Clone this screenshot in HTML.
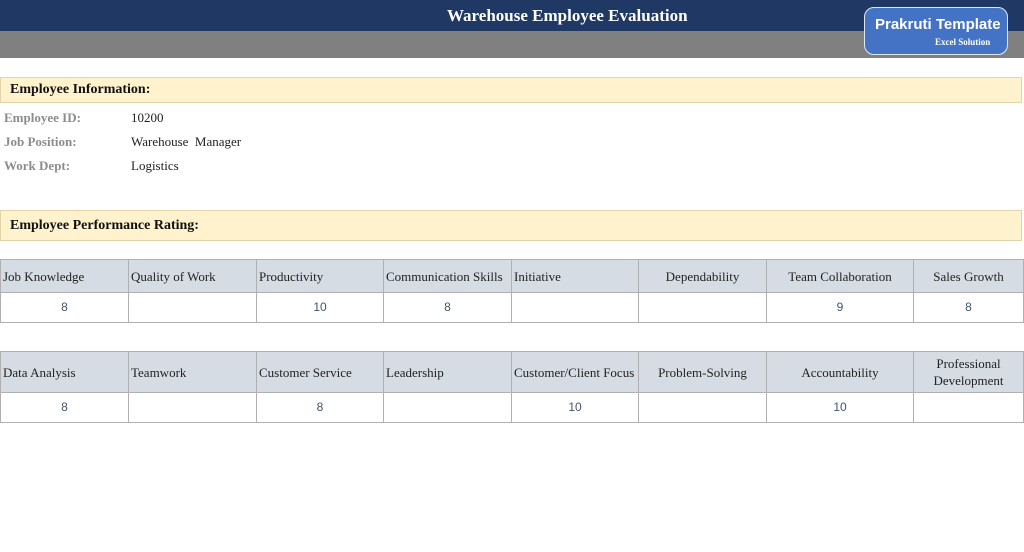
<!DOCTYPE html><html><head><style>
body{margin:0;width:1024px;height:552px;background:#fff;position:relative;overflow:hidden;font-family:"Liberation Serif",serif;}
.a{position:absolute}
.bar{position:absolute;left:0;width:1022px;background:#fff2cc;border:1px solid #e3d3a8;font-weight:bold;font-size:14px;color:#111;box-sizing:border-box;padding-left:9px}
.lbl{position:absolute;left:4px;font-weight:bold;color:#8c8c8c;font-size:13px}
.val{position:absolute;left:131px;color:#222;font-size:13px}
table{position:absolute;left:0;border-collapse:collapse;table-layout:fixed;width:1023px;font-size:13px}
td{border:1px solid #b0b0b0;padding:0 2px;line-height:17px}
tr.h td{background:#d6dce4;color:#222}
tr.d td{text-align:center;color:#44546a;height:29px;font-family:"Liberation Sans",sans-serif;font-size:12px}
.c{text-align:center}
</style></head><body>
<div class="a" style="left:0;top:0;width:1024px;height:31px;background:#1f3864"></div>
<div class="a" style="left:0;top:31px;width:1024px;height:27px;background:#808080"></div>
<div class="a" style="left:447px;top:6px;color:#fff;font-weight:bold;font-size:17px">Warehouse Employee Evaluation</div>
<div class="a" style="left:864px;top:7px;width:142px;height:46px;background:#4472c4;border:1.5px solid #dfe8f7;border-radius:10px"></div>
<div class="a" style="left:875px;top:16px;color:#fff;font-family:'Liberation Sans',sans-serif;font-weight:bold;font-size:15px">Prakruti Template</div>
<div class="a" style="left:935px;top:37px;color:#fff;font-weight:bold;font-size:9px">Excel Solution</div>
<div class="bar" style="top:77px;height:26px;line-height:24px">Employee Information:</div>
<div class="lbl" style="top:110px">Employee ID:</div><div class="val" style="top:110px">10200</div>
<div class="lbl" style="top:134px">Job Position:</div><div class="val" style="top:134px">Warehouse&nbsp; Manager</div>
<div class="lbl" style="top:158px">Work Dept:</div><div class="val" style="top:158px">Logistics</div>
<div class="bar" style="top:210px;height:31px;line-height:30px">Employee Performance Rating:</div>
<table style="top:259px"><colgroup><col style="width:128px"><col style="width:128px"><col style="width:127px"><col style="width:128px"><col style="width:127px"><col style="width:128px"><col style="width:147px"><col style="width:110px"></colgroup>
<tr class="h" style="height:33px"><td>Job Knowledge</td><td>Quality of Work</td><td>Productivity</td><td>Communication Skills</td><td>Initiative</td><td class="c">Dependability</td><td class="c">Team Collaboration</td><td class="c">Sales Growth</td></tr>
<tr class="d"><td>8</td><td></td><td>10</td><td>8</td><td></td><td></td><td>9</td><td>8</td></tr></table>
<table style="top:351px"><colgroup><col style="width:128px"><col style="width:128px"><col style="width:127px"><col style="width:128px"><col style="width:127px"><col style="width:128px"><col style="width:147px"><col style="width:110px"></colgroup>
<tr class="h" style="height:41px"><td>Data Analysis</td><td>Teamwork</td><td>Customer Service</td><td>Leadership</td><td>Customer/Client Focus</td><td class="c">Problem-Solving</td><td class="c">Accountability</td><td class="c">Professional Development</td></tr>
<tr class="d"><td>8</td><td></td><td>8</td><td></td><td>10</td><td></td><td>10</td><td></td></tr></table>
</body></html>
